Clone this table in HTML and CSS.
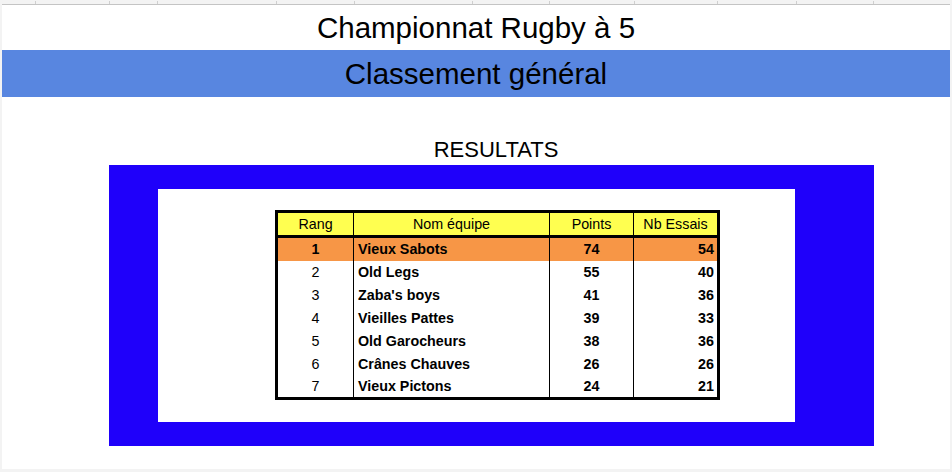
FILE: index.html
```html
<!DOCTYPE html>
<html lang="fr">
<head>
<meta charset="utf-8">
<title>Championnat Rugby à 5</title>
<link rel="stylesheet" href="styles.css">
</head>
<body>
<div class="sheet">
  <div class="ruler">
    <span class="tick w35"></span><span class="tick w74"></span><span class="tick w48"></span><span class="tick w119"></span><span class="tick w78"></span><span class="tick w118"></span><span class="tick w77"></span><span class="tick w85"></span><span class="tick w83"></span><span class="tick w79"></span><span class="tick w77"></span>
  </div>
  <div class="title">Championnat Rugby à 5</div>
  <div class="band">Classement général</div>
  <div class="subtitle">RESULTATS</div>
  <div class="frame">
    <div class="inner">
      <div class="tbl">
        <div class="row head">
          <div class="c rang">Rang</div>
          <div class="c nom center">Nom équipe</div>
          <div class="c pts">Points</div>
          <div class="c ess center">Nb Essais</div>
        </div>
        <div class="row first">
          <div class="c rang b">1</div>
          <div class="c nom b">Vieux Sabots</div>
          <div class="c pts b">74</div>
          <div class="c ess b">54</div>
        </div>
        <div class="row">
          <div class="c rang">2</div>
          <div class="c nom b">Old Legs</div>
          <div class="c pts b">55</div>
          <div class="c ess b">40</div>
        </div>
        <div class="row">
          <div class="c rang">3</div>
          <div class="c nom b">Zaba's boys</div>
          <div class="c pts b">41</div>
          <div class="c ess b">36</div>
        </div>
        <div class="row">
          <div class="c rang">4</div>
          <div class="c nom b">Vieilles Pattes</div>
          <div class="c pts b">39</div>
          <div class="c ess b">33</div>
        </div>
        <div class="row">
          <div class="c rang">5</div>
          <div class="c nom b">Old Garocheurs</div>
          <div class="c pts b">38</div>
          <div class="c ess b">36</div>
        </div>
        <div class="row">
          <div class="c rang">6</div>
          <div class="c nom b">Crânes Chauves</div>
          <div class="c pts b">26</div>
          <div class="c ess b">26</div>
        </div>
        <div class="row last">
          <div class="c rang">7</div>
          <div class="c nom b">Vieux Pictons</div>
          <div class="c pts b">24</div>
          <div class="c ess b">21</div>
        </div>
      </div>
    </div>
  </div>
</div>
</body>
</html>
```
FILE: styles.css
```css
html, body {
  margin: 0;
  padding: 0;
  background: #f3f3f3;
}
body {
  font-family: "Liberation Sans", Arial, sans-serif;
  color: #000;
}
.sheet {
  margin: 0 2px;
  width: 948px;
  height: 469px;
  background: #fff;
}
.ruler {
  display: flex;
  align-items: flex-end;
  height: 4px;
  background: #f3f3f3;
  border-bottom: 1px solid #c4c4c4;
  box-sizing: content-box;
}
.tick {
  height: 3px;
  border-right: 1px solid #cfcfcf;
  box-sizing: border-box;
  flex: none;
}
.w35 { width: 34px; }
.w74 { width: 74px; }
.w48 { width: 48px; }
.w119 { width: 119px; }
.w78 { width: 78px; }
.w118 { width: 118px; }
.w77 { width: 77px; }
.w85 { width: 85px; }
.w83 { width: 83px; }
.w79 { width: 79px; }
.title {
  height: 45px;
  line-height: 45px;
  text-align: center;
  font-size: 29.5px;
}
.band {
  height: 47px;
  line-height: 47px;
  text-align: center;
  font-size: 29.5px;
  background: #5886e0;
}
.subtitle {
  height: 68px;
  box-sizing: border-box;
  padding-top: 40px;
  padding-left: 40px;
  line-height: 25px;
  text-align: center;
  font-size: 22px;
}
.frame {
  margin-left: 107px;
  width: 765px;
  height: 281px;
  box-sizing: border-box;
  padding: 24px 79px 24px 49px;
  background: #1f00fa;
}
.inner {
  height: 233px;
  background: #fff;
  padding: 21px 0 0 117px;
  box-sizing: border-box;
}
.tbl {
  display: inline-block;
  border: 3px solid #000;
  font-size: 14.3px;
}
.row {
  display: flex;
  height: 23px;
  line-height: 23px;
}
.row.head {
  height: 22px;
  line-height: 22px;
  background: #ffff50;
  border-bottom: 3px solid #000;
}
.row.first {
  background: #f79646;
}
.row.last {
  height: 21px;
  line-height: 21px;
}
.c {
  flex: none;
  box-sizing: border-box;
  white-space: nowrap;
}
.rang {
  width: 75px;
  text-align: center;
}
.nom {
  width: 196px;
  border-left: 1px solid #000;
  padding-left: 4px;
}
.pts {
  width: 84px;
  border-left: 1px solid #000;
  text-align: center;
}
.ess {
  width: 84px;
  border-left: 1px solid #000;
  text-align: right;
  padding-right: 3px;
}
.center {
  text-align: center;
  padding-left: 0;
  padding-right: 0;
}
.b {
  font-weight: bold;
}
```
